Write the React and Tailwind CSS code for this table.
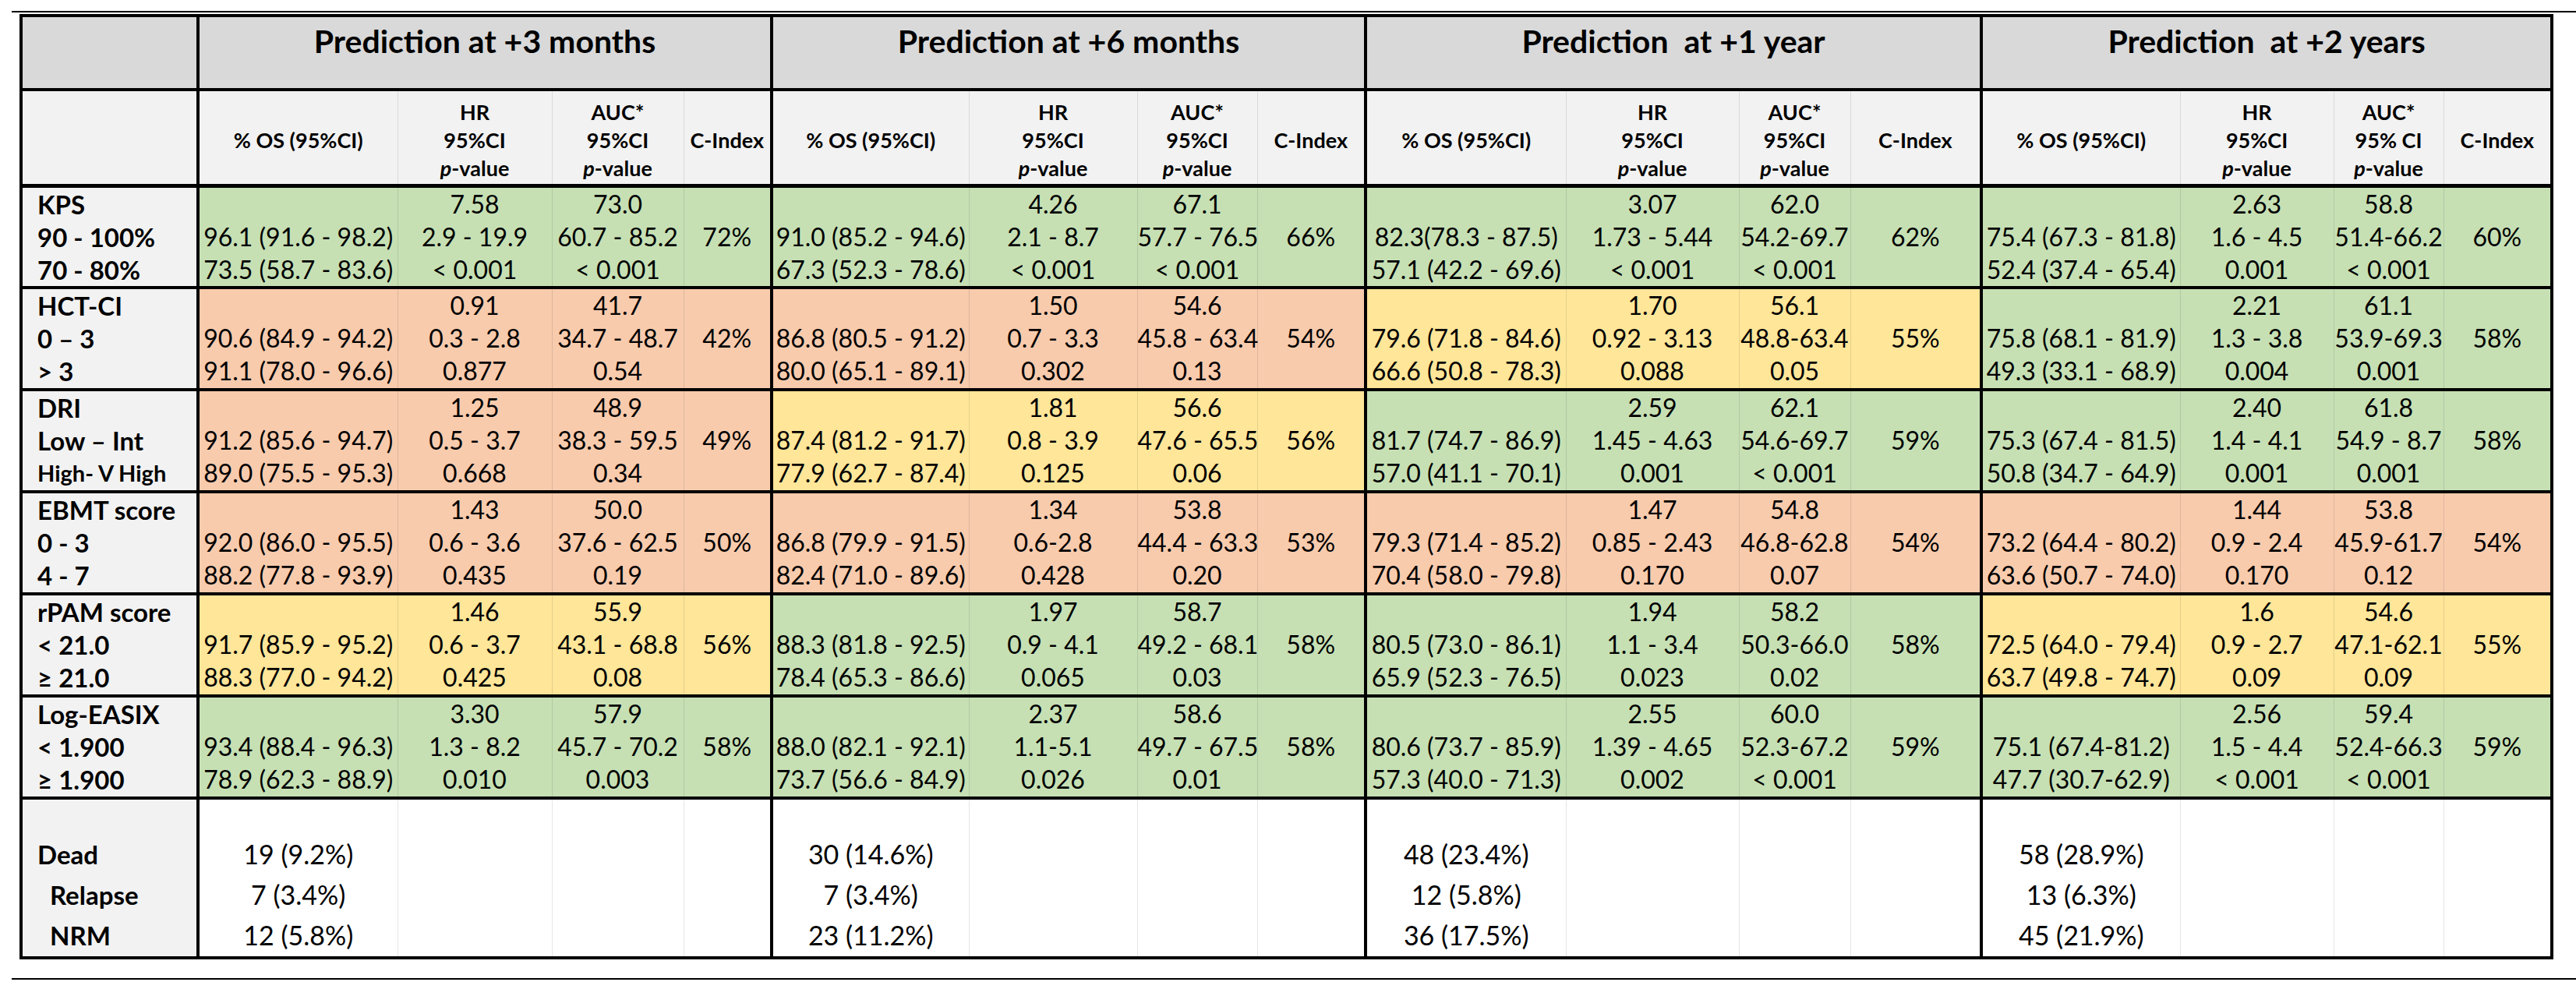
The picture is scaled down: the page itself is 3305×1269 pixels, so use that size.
import React from "react";

// Survival prediction table: four horizons, each with OS / HR / AUC / C-index sub-columns.
const GROUPS = [
  { title: "Prediction at +3 months", auc: "95%CI", widths: [256, 198, 169, 113] },
  { title: "Prediction at +6 months", auc: "95%CI", widths: [253, 216, 154, 139] },
  { title: "Prediction\u00a0 at +1 year", auc: "95%CI", widths: [257, 222, 143, 168] },
  { title: "Prediction\u00a0 at +2 years", auc: "95% CI", widths: [255, 197, 141, 139] },
];

const BG = {
  g: "bg-[#c6e0b4]",
  o: "bg-[#f8cbad]",
  y: "bg-[#ffe699]",
};

const ROWS = [
  {
    label: ["KPS", "90 - 100%", "70 - 80%"],
    cells: [
      { c: "g", os: ["96.1 (91.6 - 98.2)", "73.5 (58.7 - 83.6)"], hr: ["7.58", "2.9 - 19.9", "< 0.001"], auc: ["73.0", "60.7 - 85.2", "< 0.001"], ci: "72%" },
      { c: "g", os: ["91.0 (85.2 - 94.6)", "67.3 (52.3 - 78.6)"], hr: ["4.26", "2.1 - 8.7", "< 0.001"], auc: ["67.1", "57.7 - 76.5", "< 0.001"], ci: "66%" },
      { c: "g", os: ["82.3(78.3 - 87.5)", "57.1 (42.2 - 69.6)"], hr: ["3.07", "1.73 - 5.44", "< 0.001"], auc: ["62.0", "54.2-69.7", "< 0.001"], ci: "62%" },
      { c: "g", os: ["75.4 (67.3 - 81.8)", "52.4 (37.4 - 65.4)"], hr: ["2.63", "1.6 - 4.5", "0.001"], auc: ["58.8", "51.4-66.2", "< 0.001"], ci: "60%" },
    ],
  },
  {
    label: ["HCT-CI", "0 \u2013 3", "> 3"],
    cells: [
      { c: "o", os: ["90.6 (84.9 - 94.2)", "91.1 (78.0 - 96.6)"], hr: ["0.91", "0.3 - 2.8", "0.877"], auc: ["41.7", "34.7 - 48.7", "0.54"], ci: "42%" },
      { c: "o", os: ["86.8 (80.5 - 91.2)", "80.0 (65.1 - 89.1)"], hr: ["1.50", "0.7 - 3.3", "0.302"], auc: ["54.6", "45.8 - 63.4", "0.13"], ci: "54%" },
      { c: "y", os: ["79.6 (71.8 - 84.6)", "66.6 (50.8 - 78.3)"], hr: ["1.70", "0.92 - 3.13", "0.088"], auc: ["56.1", "48.8-63.4", "0.05"], ci: "55%" },
      { c: "g", os: ["75.8 (68.1 - 81.9)", "49.3 (33.1 - 68.9)"], hr: ["2.21", "1.3 - 3.8", "0.004"], auc: ["61.1", "53.9-69.3", "0.001"], ci: "58%" },
    ],
  },
  {
    label: ["DRI", "Low \u2013 Int", "High- V High"],
    small: true,
    cells: [
      { c: "o", os: ["91.2 (85.6 - 94.7)", "89.0 (75.5 - 95.3)"], hr: ["1.25", "0.5 - 3.7", "0.668"], auc: ["48.9", "38.3 - 59.5", "0.34"], ci: "49%" },
      { c: "y", os: ["87.4 (81.2 - 91.7)", "77.9 (62.7 - 87.4)"], hr: ["1.81", "0.8 - 3.9", "0.125"], auc: ["56.6", "47.6 - 65.5", "0.06"], ci: "56%" },
      { c: "g", os: ["81.7 (74.7 - 86.9)", "57.0 (41.1 - 70.1)"], hr: ["2.59", "1.45 - 4.63", "0.001"], auc: ["62.1", "54.6-69.7", "< 0.001"], ci: "59%" },
      { c: "g", os: ["75.3 (67.4 - 81.5)", "50.8 (34.7 - 64.9)"], hr: ["2.40", "1.4 - 4.1", "0.001"], auc: ["61.8", "54.9 - 8.7", "0.001"], ci: "58%" },
    ],
  },
  {
    label: ["EBMT score", "0 - 3", "4 - 7"],
    cells: [
      { c: "o", os: ["92.0 (86.0 - 95.5)", "88.2 (77.8 - 93.9)"], hr: ["1.43", "0.6 - 3.6", "0.435"], auc: ["50.0", "37.6 - 62.5", "0.19"], ci: "50%" },
      { c: "o", os: ["86.8 (79.9 - 91.5)", "82.4 (71.0 - 89.6)"], hr: ["1.34", "0.6-2.8", "0.428"], auc: ["53.8", "44.4 - 63.3", "0.20"], ci: "53%" },
      { c: "o", os: ["79.3 (71.4 - 85.2)", "70.4 (58.0 - 79.8)"], hr: ["1.47", "0.85 - 2.43", "0.170"], auc: ["54.8", "46.8-62.8", "0.07"], ci: "54%" },
      { c: "o", os: ["73.2 (64.4 - 80.2)", "63.6 (50.7 - 74.0)"], hr: ["1.44", "0.9 - 2.4", "0.170"], auc: ["53.8", "45.9-61.7", "0.12"], ci: "54%" },
    ],
  },
  {
    label: ["rPAM score", "< 21.0", "\u2265 21.0"],
    cells: [
      { c: "y", os: ["91.7 (85.9 - 95.2)", "88.3 (77.0 - 94.2)"], hr: ["1.46", "0.6 - 3.7", "0.425"], auc: ["55.9", "43.1 - 68.8", "0.08"], ci: "56%" },
      { c: "g", os: ["88.3 (81.8 - 92.5)", "78.4 (65.3 - 86.6)"], hr: ["1.97", "0.9 - 4.1", "0.065"], auc: ["58.7", "49.2 - 68.1", "0.03"], ci: "58%" },
      { c: "g", os: ["80.5 (73.0 - 86.1)", "65.9 (52.3 - 76.5)"], hr: ["1.94", "1.1 - 3.4", "0.023"], auc: ["58.2", "50.3-66.0", "0.02"], ci: "58%" },
      { c: "y", os: ["72.5 (64.0 - 79.4)", "63.7 (49.8 - 74.7)"], hr: ["1.6", "0.9 - 2.7", "0.09"], auc: ["54.6", "47.1-62.1", "0.09"], ci: "55%" },
    ],
  },
  {
    label: ["Log-EASIX", "< 1.900", "\u2265 1.900"],
    cells: [
      { c: "g", os: ["93.4 (88.4 - 96.3)", "78.9 (62.3 - 88.9)"], hr: ["3.30", "1.3 - 8.2", "0.010"], auc: ["57.9", "45.7 - 70.2", "0.003"], ci: "58%" },
      { c: "g", os: ["88.0 (82.1 - 92.1)", "73.7 (56.6 - 84.9)"], hr: ["2.37", "1.1-5.1", "0.026"], auc: ["58.6", "49.7 - 67.5", "0.01"], ci: "58%" },
      { c: "g", os: ["80.6 (73.7 - 85.9)", "57.3 (40.0 - 71.3)"], hr: ["2.55", "1.39 - 4.65", "0.002"], auc: ["60.0", "52.3-67.2", "< 0.001"], ci: "59%" },
      { c: "g", os: ["75.1 (67.4-81.2)", "47.7 (30.7-62.9)"], hr: ["2.56", "1.5 - 4.4", "< 0.001"], auc: ["59.4", "52.4-66.3", "< 0.001"], ci: "59%" },
    ],
  },
];

const EVENTS = [
  ["19 (9.2%)", "7 (3.4%)", "12 (5.8%)"],
  ["30 (14.6%)", "7 (3.4%)", "23 (11.2%)"],
  ["48 (23.4%)", "12 (5.8%)", "36 (17.5%)"],
  ["58 (28.9%)", "13 (6.3%)", "45 (21.9%)"],
];

// Left/right borders for the four sub-columns of a group: thick at the group edges, faint inside.
const SIDE = [
  "border-l-4 border-l-black border-r border-r-black/10",
  "border-x border-x-black/10",
  "border-x border-x-black/10",
  "border-l border-l-black/10 border-r-4 border-r-black",
];

function Lines({ items, className = "" }) {
  return items.map((t, i) => (
    <div key={i} className={`h-[42px] leading-[42px] whitespace-nowrap ${className}`}>
      {t}
    </div>
  ));
}

function PValue() {
  return (
    <>
      <i>p</i>-value
    </>
  );
}

export default function App() {
  return (
    <div className="w-[3305px] h-[1269px] bg-white pt-[14px] pl-[15px] font-['Lato',sans-serif] text-black">
      <div className="h-[2px] bg-black" />
      <table className="ml-[10px] mt-[2px] w-[3247px] table-fixed border-collapse">
        <colgroup>
          <col className="w-[227px]" />
          {GROUPS.map((g) => g.widths.map((w, i) => <col key={g.title + i} style={{ width: w }} />))}
        </colgroup>
        <thead>
          <tr className="h-[95px]">
            <th className="border-4 border-black bg-[#d9d9d9] p-0" />
            {GROUPS.map((g) => (
              <th
                key={g.title}
                colSpan={4}
                className="border-4 border-black bg-[#d9d9d9] p-0 pt-[5px] align-top text-center text-[41px] font-bold leading-[52px] whitespace-pre"
              >
                {g.title}
              </th>
            ))}
          </tr>
          <tr className="h-[123px]">
            <th className="border-4 border-b-[5px] border-black bg-[#f2f2f2] p-0" />
            {GROUPS.map((g) =>
              [
                ["% OS (95%CI)"],
                ["HR", "95%CI", <PValue key="p" />],
                ["AUC*", g.auc, <PValue key="p" />],
                ["C-Index"],
              ].map((lines, i) => (
                <th
                  key={g.title + i}
                  className={`${SIDE[i]} border-t-4 border-t-black border-b-[5px] border-b-black bg-[#f2f2f2] p-0 pt-[8px] align-middle text-center text-[27px] font-bold leading-[36px] whitespace-nowrap`}
                >
                  {lines.map((l, k) => (
                    <div key={k}>{l}</div>
                  ))}
                </th>
              ))
            )}
          </tr>
        </thead>
        <tbody>
          {ROWS.map((row) => (
            <tr key={row.label[0]} className="h-[131px]">
              <td className="border-4 border-black bg-[#f2f2f2] p-0 pl-[19px] align-top text-[33px] font-bold">
                <Lines items={row.label.slice(0, 2)} />
                <Lines items={[row.label[2]]} className={row.small ? "text-[29px]" : ""} />
              </td>
              {row.cells.map((cell, gi) =>
                [
                  ["", ...cell.os],
                  cell.hr,
                  cell.auc,
                  ["", cell.ci, ""],
                ].map((lines, i) => (
                  <td
                    key={gi + "-" + i}
                    className={`${SIDE[i]} border-t-4 border-b-4 border-t-black border-b-black ${BG[cell.c]} p-0 align-top text-center text-[32px]`}
                  >
                    <Lines items={lines} />
                  </td>
                ))
              )}
            </tr>
          ))}
          <tr className="h-[205px]">
            <td className="border-4 border-black bg-[#f2f2f2] p-0 pt-[44px] pl-[19px] align-top text-[33px] font-bold">
              <div className="h-[52px] leading-[52px]">Dead</div>
              <div className="h-[52px] leading-[52px] pl-[16px]">Relapse</div>
              <div className="h-[52px] leading-[52px] pl-[16px]">NRM</div>
            </td>
            {EVENTS.map((ev, gi) =>
              [0, 1, 2, 3].map((i) => (
                <td
                  key={gi + "-" + i}
                  className={`${SIDE[i]} border-t-4 border-b-4 border-t-black border-b-black bg-white p-0 pt-[44px] align-top text-center text-[34px]`}
                >
                  {i === 0 &&
                    ev.map((t, k) => (
                      <div key={k} className="h-[52px] leading-[52px] whitespace-nowrap">
                        {t}
                      </div>
                    ))}
                </td>
              ))
            )}
          </tr>
        </tbody>
      </table>
      <div className="mt-[24px] h-[2px] bg-black" />
    </div>
  );
}
